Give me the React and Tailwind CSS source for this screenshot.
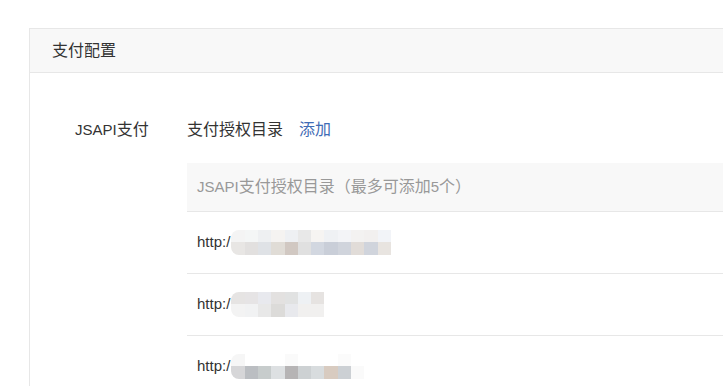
const font = { fontFamily: '"Liberation Sans", "Noto Sans CJK SC", sans-serif' };

// mosaic blocks that hide the real domains
const mosaics = [
  {
    top: ['#f4f4f4', '#f4f6f6', '#eef0f2', '#f5f3f1', '#eef0f3', '#e8e8e8', '#f6f4f2', '#eff1f4', '#f3f4f7', '#f3f2f1', '#f2f0ef', '#f2f4f8'],
    bottom: ['#e8e6e4', '#e2e0df', '#dfe2e6', '#e0dcd6', '#d1c8c2', '#e0e0e0', '#d2d7e0', '#c9ced8', '#d0d4dc', '#e1dcd8', '#d0d4dc', '#e8e4e0'],
  },
  {
    top: ['#e6e4e3', '#e6e4e5', '#e8e9ee', '#e3e1e0', '#e1e2e2', '#eef1f4', '#e6e3e1'],
    bottom: ['#f3f3f3', '#f1f2f3', '#e8e8e8', '#dcdbd9', '#e8e9ed', '#f1f0ef', '#f1f0ef'],
  },
  {
    top: ['#f6f6f6', '#ffffff', '#ffffff', '#ffffff', '#fafafa', '#ffffff', '#ffffff', '#ffffff', '#fbfbfb', '#ffffff'],
    bottom: ['#d6d6d8', '#bbbec2', '#c7cccc', '#dde0e2', '#b6b4b5', '#cdd1d3', '#d8dcde', '#d8cbc0', '#ccd0d4', '#fafafa'],
  },
];

function Mosaic({ top, bottom }) {
  return (
    <div className="flex flex-col rounded-l-[8px] overflow-hidden ml-[1px]">
      <div className="flex">
        {top.map((c, i) => (
          <span key={i} className="block w-[13.3px] h-[12px]" style={{ background: c }}></span>
        ))}
      </div>
      <div className="flex">
        {bottom.map((c, i) => (
          <span key={i} className="block w-[13.3px] h-[13px]" style={{ background: c }}></span>
        ))}
      </div>
    </div>
  );
}

export default function App() {
  return (
    <div style={font} className="w-[723px] h-[386px] overflow-hidden bg-white pt-[28px] pl-[29px] text-[16px] text-[#333]">
      <div className="border-l border-t border-[#e7e7e7] min-h-[400px]">
        <div className="h-[44px] bg-[#f8f8f8] border-b border-[#e7e7e7] pl-[22px] flex items-center">
          支付配置
        </div>

        <div className="flex pt-[47px]">
          <div className="w-[157px] pl-[45px] leading-[20px] shrink-0">
            <span className="text-[15px]">JSAPI</span>支付
          </div>
          <div className="flex-1">
            <div className="leading-[20px] flex gap-[16px]">
              <span>支付授权目录</span>
              <span className="text-[#3f6cb5]">添加</span>
            </div>

            <div className="mt-[23px]">
              <div className="h-[49px] bg-[#f8f8f8] border-b border-[#e7e7e7] pl-[10px] flex items-center text-[#999]">
                <span className="text-[15px]">JSAPI</span>支付授权目录（最多可添加<span className="text-[15px]">5</span>个）
              </div>
              {mosaics.map((m, i) => (
                <div key={i} className="h-[62px] border-b border-[#e7e7e7] pl-[10px] flex items-center">
                  <span className="text-[15px]">http:/</span>
                  <Mosaic top={m.top} bottom={m.bottom} />
                </div>
              ))}
            </div>
          </div>
        </div>
      </div>
    </div>
  );
}
